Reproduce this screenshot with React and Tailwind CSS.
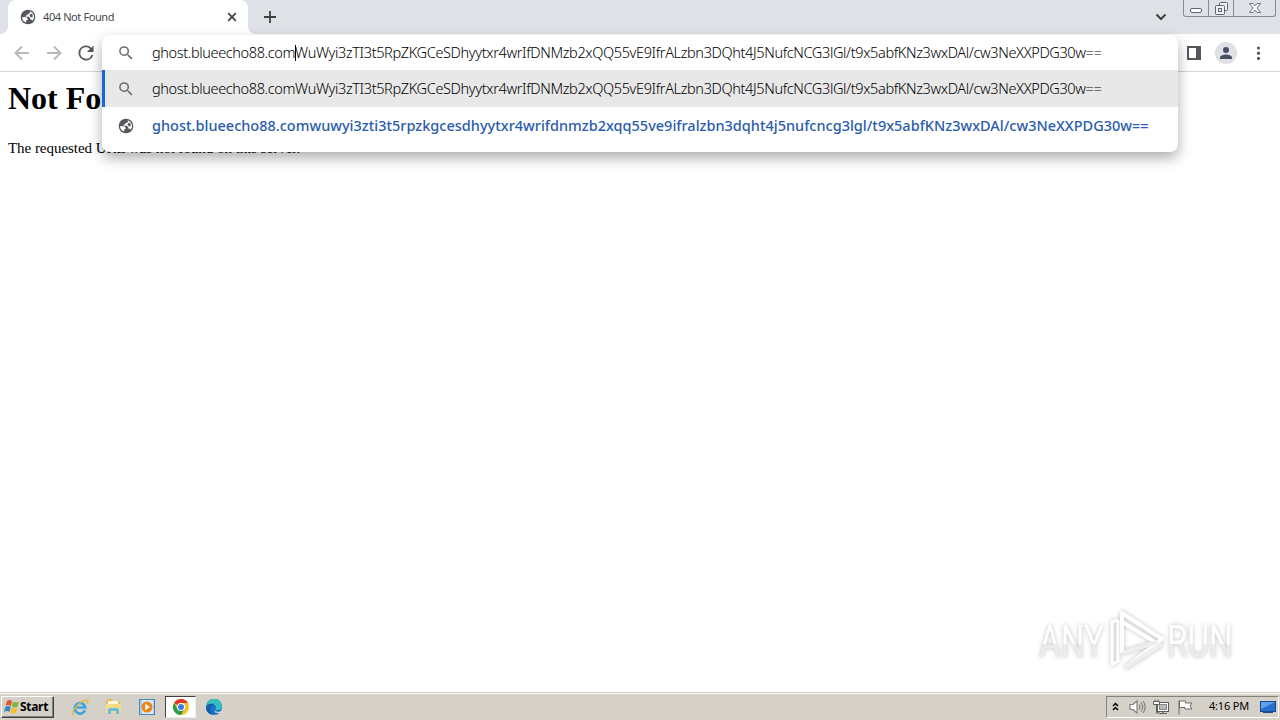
import React from 'react'

const typedUrl = "ghost.blueecho88.com";
const restUrl = "WuWyi3zTI3t5RpZKGCeSDhyytxr4wrIfDNMzb2xQQ55vE9IfrALzbn3DQht4J5NufcNCG3lGl/t9x5abfKNz3wxDAl/cw3NeXXPDG30w==";
const siteUrl = "ghost.blueecho88.comwuwyi3zti3t5rpzkgcesdhyytxr4wrifdnmzb2xqq55ve9ifralzbn3dqht4j5nufcncg3lgl/t9x5abfKNz3wxDAl/cw3NeXXPDG30w==";

function Globe() {
  return (
    <svg className="w-4 h-4 shrink-0" viewBox="0 0 16 16">
      <circle cx="8" cy="8" r="7.300" fill="#54585d" />
      <path d="M2 8.300q3-.900 4.800.200 1.500 1 .700 2.600l-1.300.200v2.300Q2.500 12.500 2 8.300z" fill="#fff" />
      <path d="M9.500 2.200q1.300 1.600-.300 2.600H7.800L7.300 6.300l-1.600.300v1.100h3.200l1.300 1.500v1.200h1.400l.400 1.300q2.600-2 1.900-5-.900-3.500-4.400-4.500z" fill="#fff" />
      <path d="M9.400 6.300l1.700-1.700 1.500 1.200v2.400h-2z" fill="#54585d" />
    </svg>
  )
}

function Search() {
  return (
    <svg className="w-4 h-4 shrink-0" viewBox="1.500 1.500 21 21" fill="#6b6e72">
      <path d="M15.500 14h-.790l-.280-.270A6.470 6.470 0 0 0 16 9.500 6.500 6.500 0 1 0 9.500 16c1.610 0 3.090-.590 4.230-1.570l.270.280v.790l5 4.990L20.490 19zm-6 0a4.500 4.500 0 1 1 0-9 4.500 4.500 0 0 1 0 9z" />
    </svg>
  )
}

function TabStrip() {
  return (
    <div className="flex h-[34px] bg-[#dee1e6] shrink-0">
      <div className="w-2 bg-white"><div className="h-full bg-[#dee1e6] rounded-br-lg"></div></div>
      <div className="flex items-center w-[240px] bg-white rounded-t-lg pl-3 pr-[11px]">
        <Globe />
        <span className="ml-[7px] text-[11px] tracking-[-0.4px] text-[#45494d]">404 Not Found</span>
        <svg className="ml-auto w-[10px] h-[10px]" viewBox="0 0 10 10" stroke="#3c4043" strokeWidth="1.700"><path d="M1.200 1.200l7.600 7.600M8.800 1.200L1.200 8.800" /></svg>
      </div>
      <div className="w-2 bg-white"><div className="h-full bg-[#dee1e6] rounded-bl-lg"></div></div>
      <svg className="ml-2 mt-[11px] w-3 h-3" viewBox="0 0 12 12" stroke="#3c4043" strokeWidth="1.800"><path d="M0 6h12M6 0v12" /></svg>
      <svg className="ml-auto mr-4 mt-[13px] w-3 h-2" viewBox="0 0 12 8" fill="none" stroke="#3c4043" strokeWidth="2"><path d="M1.500 1.500L6 6l4.500-4.500" /></svg>
      {/* window buttons */}
      <div className="flex w-[93px] h-[17px] mr-1 border border-t-0 border-[#858b95] rounded-b-[3px]">
        <div className="w-[25px] border-r border-[#858b95] flex justify-center">
          <svg className="w-3 h-4" viewBox="0 0 12 16" fill="#fff" stroke="#5f6570"><rect x="0.500" y="8.500" width="11" height="4" rx="1.500" /></svg>
        </div>
        <div className="w-[25px] border-r border-[#858b95] flex justify-center">
          <svg className="w-[13px] h-4" viewBox="0 0 13 16" fill="#eef0f3" stroke="#5f6570"><rect x="4.500" y="2.500" width="8" height="8" rx="1" /><rect x="0.500" y="5.500" width="9" height="9" rx="1" /><rect x="3.500" y="8.500" width="3" height="3" /></svg>
        </div>
        <div className="flex-1 flex justify-center">
          <svg className="w-3 h-4" viewBox="0 0 12 16" fill="#fff" stroke="#5f6570" strokeWidth="0.900"><path d="M.5 3.500h3.500L6 5.800l2-2.300h3.500L8 8l3.500 4.500H8l-2-2.300-2 2.300H.5L4 8z" /></svg>
        </div>
      </div>
    </div>
  )
}

function Toolbar() {
  return (
    <div className="relative z-10 flex items-center h-[38px] shrink-0 bg-white border-b border-[#d3d5d8] pl-[14px] pr-[14px]">
      <svg className="w-4 h-4" viewBox="0 0 16 16" fill="none" stroke="#b7b9bb" strokeWidth="1.900"><path d="M15 8H2.500M8 1.500L1.500 8 8 14.500" /></svg>
      <svg className="ml-4 w-4 h-4" viewBox="0 0 16 16" fill="none" stroke="#b7b9bb" strokeWidth="1.900"><path d="M1 8h12.500M8 1.500L14.500 8 8 14.500" /></svg>
      <svg className="ml-4 w-4 h-4" viewBox="3.500 3.500 17 17" fill="#54585d"><path d="M17.650 6.350A7.958 7.958 0 0 0 12 4a8 8 0 1 0 7.730 10h-2.080A6 6 0 1 1 12 6c1.660 0 3.140.690 4.220 1.780L13 11h7V4z" /></svg>

      <svg className="ml-auto w-[14px] h-[14px]" viewBox="0 0 14 14"><rect x="1" y="1" width="12" height="12" fill="#fff" stroke="#54585d" strokeWidth="2" /><path d="M9 1h4v12H9z" fill="#54585d" /></svg>
      <div className="ml-[14px] w-[22px] h-[22px] rounded-full bg-[#dee1e6] flex items-center justify-center">
        <svg className="w-3 h-3" viewBox="4 4 16 16" fill="#4a5064"><path d="M12 12a4 4 0 1 0 0-8 4 4 0 0 0 0 8zm0 2c-2.670 0-8 1.340-8 4v2h16v-2c0-2.660-5.330-4-8-4z" /></svg>
      </div>
      <svg className="ml-[15px] w-[14px] h-4" viewBox="0 0 14 16" fill="#54585d"><circle cx="6.500" cy="3" r="1.600" /><circle cx="6.500" cy="8.200" r="1.600" /><circle cx="6.500" cy="13.400" r="1.600" /></svg>

      {/* suggestions popup */}
      <div className="absolute left-[102px] top-px w-[1076px] h-[117px] bg-white rounded-lg overflow-hidden shadow-[0_6px_14px_rgba(0,0,0,0.32)] whitespace-nowrap text-black text-[14.5px]">
        <div className="flex items-center h-[35px] pl-4">
          <Search />
          <div className="ml-[18px] font-light tracking-[-0.37px]">{typedUrl}<span className="inline-block w-px h-4 -mr-px align-[-3px] bg-black"></span>{restUrl}</div>
        </div>
        <div className="flex items-center h-[37px] pl-[13px] bg-[#e8e8e8] border-l-3 border-[#1a67d8]">
          <Search />
          <div className="ml-[18px] font-light tracking-[-0.37px]">{typedUrl}{restUrl}</div>
        </div>
        <div className="flex items-center h-[37px] pl-4">
          <Globe />
          <div className="ml-[18px] font-medium text-[#2b5cab] tracking-[0px]">{siteUrl}</div>
        </div>
      </div>
    </div>
  )
}

function AnyRun() {
  return (
    <div className="flex items-center w-[196px] h-[64px] text-white text-[45px] leading-none font-['Roboto'] [filter:drop-shadow(0_0_2px_rgba(0,0,0,0.25))]">
      <div className="w-[68px]"><span className="inline-block origin-left scale-x-[0.74] bg-gradient-to-b from-white from-55% to-[#ececec] to-55% bg-clip-text text-transparent">ANY</span></div>
      <svg className="w-[60px] h-[64px] shrink-0" viewBox="0 0 60 64" fill="none" stroke="#fff" strokeWidth="4" strokeLinejoin="round">
        <path d="M15 44V4l40 26-37 29M15 13l33 20" />
        <path d="M11 11L5 13v43l6-4V11" strokeWidth="3" />
        <path d="M15 44l35-11M18 59l37-24" stroke="#eee" />
      </svg>
      <span className="inline-block origin-left scale-x-[0.74] bg-gradient-to-b from-white from-55% to-[#ececec] to-55% bg-clip-text text-transparent">RUN</span>
    </div>
  )
}

function Page() {
  return (
    <div className="relative flex-1 bg-white text-black font-['Liberation_Serif',serif] pl-2">
      <h1 className="text-[32px] font-bold leading-[37px] pt-[8px]">Not Found</h1>
      <p className="text-[15px] leading-[18px] mt-[22px] tracking-[-0.04px]">The requested URL was not found on this server.</p>
      <div className="absolute right-[45px] bottom-[19px]"><AnyRun /></div>
    </div>
  )
}

function Taskbar() {
  return (
    <div className="flex items-center h-[28px] shrink-0 bg-[#d5d1c9] border-t border-[#c9c6bf] shadow-[inset_0_1px_0_#fff] text-[11px] text-black">
      <div className="flex items-center w-[53px] h-[22px] ml-[1px] pl-[2px] bg-[#d5d1c9] border border-t-white border-l-white border-r-[#404040] border-b-[#404040] shadow-[inset_-1px_-1px_0_#85827c] font-bold">
        <svg className="w-4 h-4 shrink-0" viewBox="0 0 16 16">
          <path d="M3 2q3-2 5 0L7 7Q4 5 1.500 7z" fill="#e5552b" />
          <path d="M9 2.500q3 2 6 0L13.500 7.500q-3 1.500-5.500 0z" fill="#79b43c" />
          <path d="M1.300 8q3-2 5.500 0l-1.500 5Q3 11 0 13z" fill="#3a83d0" />
          <path d="M7.700 8.500q3 2 5.600 0L12 13.500q-3 2-5.600 0z" fill="#f6bd24" />
        </svg>
        <span className="text-[12px] tracking-[-0.3px]">Start</span>
      </div>
      {/* internet explorer */}
      <svg className="ml-[17px] w-[18px] h-[18px]" viewBox="0 0 18 18" fill="none">
        <path d="M14 12.200A5.300 5.300 0 1 1 14.300 9.500H5.500" stroke="#3fa5dd" strokeWidth="2.600" />
        <path d="M3 17C-1 16 5 7 11 3.500c6-3.500 7-1 5 2" stroke="#e8b62e" strokeWidth="1.300" />
      </svg>
      {/* explorer */}
      <svg className="ml-4 w-[17px] h-[17px]" viewBox="0 0 17 17">
        <path d="M1 3l2-2h4l1 2h7v11H1z" fill="#e4bd59" />
        <path d="M3 3h10v4H3z" fill="#fff8da" />
        <path d="M1 6h15v9H1z" fill="#f6dc85" />
        <path d="M3 16v-4q0-2 2-2h7q2 0 2 2v4h-3v-3H6v3z" fill="#69bce2" />
      </svg>
      {/* media player */}
      <svg className="ml-[17px] w-4 h-4" viewBox="0 0 16 16">
        <rect x="0.500" y="0.500" width="15" height="15" fill="#a9cdef" stroke="#4d86bd" />
        <rect x="3" y="1" width="11" height="14" fill="#d6e8f8" />
        <circle cx="8" cy="8" r="5.500" fill="#ef8316" />
        <path d="M6.300 4.800v6.400L11 8z" fill="#fff" />
      </svg>
      <div className="ml-[10px] flex items-center justify-center w-[31px] h-[22px] bg-white border border-t-[#404040] border-l-[#404040] border-r-[#eee] border-b-[#eee]">
        <svg className="w-4 h-4" viewBox="0 0 16 16">
          <circle cx="8" cy="8" r="8" fill="#f6c324" />
          <path d="M8 8L1.070 4A8 8 0 0 1 14.930 4H8z" fill="#dc3a2e" />
          <path d="M1.070 4A8 8 0 0 0 8 16l3.460-6L8 8 4.540 10z" fill="#2c9a4b" />
          <circle cx="8" cy="8" r="4" fill="#fff" />
          <circle cx="8" cy="8" r="3" fill="#3a7ced" />
        </svg>
      </div>
      {/* edge */}
      <svg className="ml-[10px] w-4 h-4" viewBox="0 0 16 16">
        <circle cx="8" cy="8" r="8" fill="#1473c5" />
        <path d="M0 8a8 8 0 0 1 16-1c0 3-2 4-4.500 4S9.500 9.800 10 8.500C10.500 5 3 3 0 8z" fill="#35bdc0" />
        <path d="M8.500 9c-.500 2 1 3.600 3.500 3.800 1.500 0 2.500-.500 3.200-1.300l.800 1.500-2 1.500-5-1z" fill="#d5d1c9" />
        <path d="M0 8c2-4 7-4 8-2-4 0-5 5-2 9.800A8 8 0 0 1 0 8z" fill="#175ba7" />
      </svg>

      <div className="ml-auto mr-[1px] flex items-center h-[22px] w-[173px] pl-[5px] border border-t-[#85827c] border-l-[#85827c] border-r-white border-b-white">
        <svg className="w-[7px] h-[9px]" viewBox="0 0 7 9" fill="none" stroke="#000" strokeWidth="1.500"><path d="M1 4l2.500-2.500L6 4M1 8l2.500-2.500L6 8" /></svg>
        <svg className="ml-[10px] w-[17px] h-4" viewBox="0 0 17 16" fill="none" stroke="#7a7976" strokeWidth="1.100"><path d="M1 5.500h3L8 2v12l-4-3.500H1z" fill="#fff" /><path d="M10 5.500q2 2.500 0 5M12 3.500q3.500 4.500 0 9M14 2q4.500 6 0 12" /></svg>
        <svg className="ml-[7px] w-4 h-4" viewBox="0 0 16 16" fill="none" stroke="#5e5d5a"><rect x="4.500" y="3.500" width="11" height="9" fill="#fff" /><rect x="6.500" y="5.500" width="7" height="5" fill="#bbb" stroke="#888" /><path d="M7 14.500h7M10 12v2M3.500 5v9H7" /><path d="M.5 2.500h6v3h-6zM2 .500v2M5 .500v2" fill="#fff" /></svg>
        <svg className="ml-2 w-4 h-4" viewBox="0 0 16 16" fill="#fff" stroke="#6b6a67"><path d="M2 1.500v14M2.500 2h6v2H15l-2 3 2 3H8V8.500H2.500z" /></svg>
        <span className="ml-[16px] text-[11px] tracking-[-0.2px]">4:16 PM</span>
        <svg className="ml-auto mr-[2px] w-4 h-[14px]" viewBox="0 0 16 14"><rect x="0.500" y="1.500" width="15" height="10" fill="#2470cb" stroke="#174a91" /><path d="M1 2h14L1 9z" fill="#60a0e6" /><path d="M3 12.500h10" stroke="#23477b" /></svg>
      </div>
    </div>
  )
}

function App() {
  return (
    <div className="w-[1280px] h-[720px] flex flex-col overflow-hidden font-['Noto_Sans',sans-serif]">
      <TabStrip />
      <Toolbar />
      <Page />
      <Taskbar />
    </div>
  )
}

export default App
